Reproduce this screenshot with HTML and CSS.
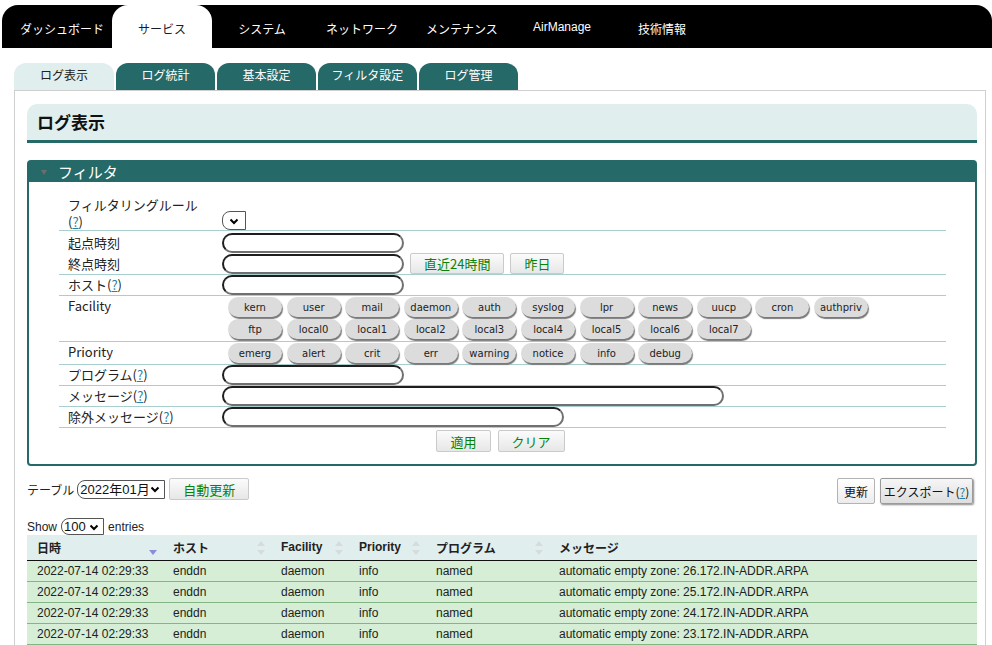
FILE: index.html
```html
<!DOCTYPE html>
<html lang="ja">
<head>
<meta charset="utf-8">
<title>ログ表示</title>
<link rel="stylesheet" href="styles.css">
</head>
<body>
<nav class="gnav">
  <a class="gnav-item">ダッシュボード</a>
  <a class="gnav-item is-active">サービス</a>
  <a class="gnav-item">システム</a>
  <a class="gnav-item">ネットワーク</a>
  <a class="gnav-item">メンテナンス</a>
  <a class="gnav-item gnav-latin">AirManage</a>
  <a class="gnav-item">技術情報</a>
</nav>
<div class="page">
  <ul class="subtabs">
    <li class="subtab is-active">ログ表示</li>
    <li class="subtab">ログ統計</li>
    <li class="subtab">基本設定</li>
    <li class="subtab">フィルタ設定</li>
    <li class="subtab">ログ管理</li>
  </ul>
  <div class="content">
    <h2 class="title">ログ表示</h2>
    <section class="panel">
      <div class="panel-head"><span class="tri"></span>フィルタ</div>
      <div class="panel-body">
        <table class="ftable">
          <tr class="r-rule">
            <th>フィルタリングルール<br>(<a class="help">?</a>)</th>
            <td class="cell-bottom">
              <span class="selbox sb-rule"><select class="sel"><option></option></select><svg class="chev" width="10" height="7" viewBox="0 0 10 7"><path d="M1.5 1.5l3.5 3.5 3.5-3.5" fill="none" stroke="#000" stroke-width="2"/></svg></span>
            </td>
          </tr>
          <tr class="r-time">
            <th>起点時刻<br>終点時刻</th>
            <td>
              <div class="line"><input class="txt w182" type="text"></div>
              <div class="line"><input class="txt w182" type="text"><button class="btn">直近24時間</button><button class="btn">昨日</button></div>
            </td>
          </tr>
          <tr>
            <th>ホスト(<a class="help">?</a>)</th>
            <td><input class="txt w182" type="text"></td>
          </tr>
          <tr>
            <th>Facility</th>
            <td>
              <div class="chips">
                <button class="chip">kern</button><button class="chip">user</button><button class="chip">mail</button><button class="chip">daemon</button><button class="chip">auth</button><button class="chip">syslog</button><button class="chip">lpr</button><button class="chip">news</button><button class="chip">uucp</button><button class="chip">cron</button><button class="chip">authpriv</button><button class="chip">ftp</button><button class="chip">local0</button><button class="chip">local1</button><button class="chip">local2</button><button class="chip">local3</button><button class="chip">local4</button><button class="chip">local5</button><button class="chip">local6</button><button class="chip">local7</button>
              </div>
            </td>
          </tr>
          <tr>
            <th>Priority</th>
            <td>
              <div class="chips chips-single">
                <button class="chip">emerg</button><button class="chip">alert</button><button class="chip">crit</button><button class="chip">err</button><button class="chip">warning</button><button class="chip">notice</button><button class="chip">info</button><button class="chip">debug</button>
              </div>
            </td>
          </tr>
          <tr>
            <th>プログラム(<a class="help">?</a>)</th>
            <td><input class="txt w182" type="text"></td>
          </tr>
          <tr>
            <th>メッセージ(<a class="help">?</a>)</th>
            <td><input class="txt w502" type="text"></td>
          </tr>
          <tr>
            <th>除外メッセージ(<a class="help">?</a>)</th>
            <td><input class="txt w342" type="text"></td>
          </tr>
        </table>
        <div class="actions">
          <button class="btn btn-act">適用</button><button class="btn btn-act">クリア</button>
        </div>
      </div>
    </section>

    <div class="toolbar">
      <div class="tb-left">
        <span class="tb-label">テーブル</span>
        <span class="selbox sb-table"><select class="sel"><option>2022年01月</option></select><svg class="chev" width="10" height="7" viewBox="0 0 10 7"><path d="M1.5 1.5l3.5 3.5 3.5-3.5" fill="none" stroke="#000" stroke-width="2"/></svg></span>
        <button class="btn btn-auto">自動更新</button>
      </div>
      <div class="tb-right">
        <button class="gbtn">更新</button>
        <button class="gbtn gbtn-export">エクスポート(<span class="help">?</span>)</button>
      </div>
    </div>

    <div class="show">Show <span class="selbox sb-len"><select class="sel"><option>100</option></select><svg class="chev" width="10" height="7" viewBox="0 0 10 7"><path d="M1.5 1.5l3.5 3.5 3.5-3.5" fill="none" stroke="#000" stroke-width="2"/></svg></span> entries</div>

    <table class="data">
      <colgroup>
        <col class="c1"><col class="c2"><col class="c3"><col class="c4"><col class="c5"><col>
      </colgroup>
      <thead>
        <tr>
          <th>日時<span class="sort"><svg width="8" height="14" viewBox="0 0 8 14"><path d="M0 9h8l-4 5z" fill="#8c8cdc"/></svg></span></th>
          <th>ホスト<span class="sort"><svg width="8" height="14" viewBox="0 0 8 14"><path d="M0 5h8L4 0z M0 9h8l-4 5z" fill="#d6dcdc"/></svg></span></th>
          <th>Facility<span class="sort"><svg width="8" height="14" viewBox="0 0 8 14"><path d="M0 5h8L4 0z M0 9h8l-4 5z" fill="#d6dcdc"/></svg></span></th>
          <th>Priority<span class="sort"><svg width="8" height="14" viewBox="0 0 8 14"><path d="M0 5h8L4 0z M0 9h8l-4 5z" fill="#d6dcdc"/></svg></span></th>
          <th>プログラム<span class="sort"><svg width="8" height="14" viewBox="0 0 8 14"><path d="M0 5h8L4 0z M0 9h8l-4 5z" fill="#d6dcdc"/></svg></span></th>
          <th>メッセージ</th>
        </tr>
      </thead>
      <tbody>
        <tr><td>2022-07-14 02:29:33</td><td>enddn</td><td>daemon</td><td>info</td><td>named</td><td>automatic empty zone: 26.172.IN-ADDR.ARPA</td></tr>
        <tr><td>2022-07-14 02:29:33</td><td>enddn</td><td>daemon</td><td>info</td><td>named</td><td>automatic empty zone: 25.172.IN-ADDR.ARPA</td></tr>
        <tr><td>2022-07-14 02:29:33</td><td>enddn</td><td>daemon</td><td>info</td><td>named</td><td>automatic empty zone: 24.172.IN-ADDR.ARPA</td></tr>
        <tr><td>2022-07-14 02:29:33</td><td>enddn</td><td>daemon</td><td>info</td><td>named</td><td>automatic empty zone: 23.172.IN-ADDR.ARPA</td></tr>
        <tr><td>2022-07-14 02:29:33</td><td>enddn</td><td>daemon</td><td>info</td><td>named</td><td>automatic empty zone: 22.172.IN-ADDR.ARPA</td></tr>
      </tbody>
    </table>
  </div>
</div>
</body>
</html>
```

FILE: styles.css
```css
* { box-sizing: border-box; }
html { overflow: hidden; }
body {
  margin: 0;
  padding-top: 5px;
  background: #fff;
  color: #222;
  font-family: "Noto Sans CJK JP", "Liberation Sans", sans-serif;
  font-size: 13px;
}
a { color: inherit; text-decoration: none; }
button { cursor: pointer; }

/* global nav */
.gnav {
  display: flex;
  height: 43px;
  margin-left: 2px;
  padding-left: 10px;
  background: #000;
  border-radius: 16px 16px 0 0;
}
.gnav-item {
  width: 100px;
  padding-top: 15px;
  text-align: center;
  font-size: 12px;
  line-height: 18px;
  color: #fff;
}
.gnav-item.is-active {
  background: #fff;
  color: #1a1a2a;
  border-radius: 16px 16px 0 0;
}
.gnav-latin {
  font-family: "Liberation Sans", sans-serif;
  padding-top: 13px;
}

/* sub tabs */
.page { padding-left: 14px; }
.subtabs {
  display: flex;
  list-style: none;
  margin: 15px 0 0;
  padding: 0;
  height: 27px;
}
.subtab {
  width: 99px;
  margin-right: 2px;
  padding-top: 4px;
  border-radius: 12px 12px 0 0;
  background: #266969;
  color: #fff;
  text-align: center;
  font-size: 12px;
  line-height: 16px;
}
.subtab.is-active {
  width: 100px;
  background: #e0eeee;
  color: #222;
}

/* content box */
.content {
  width: 972px;
  height: 600px;
  border: 1px solid #cfcfcf;
  border-bottom: 0;
  padding: 13px 8px 0 12px;
}
.title {
  margin: 0;
  height: 39px;
  padding-left: 10px;
  background: #e0eeee;
  border-bottom: 3px solid #266969;
  border-radius: 10px 10px 0 0;
  font-size: 17px;
  line-height: 36px;
  font-weight: bold;
  color: #111;
}

/* filter panel */
.panel {
  margin-top: 17px;
  border: 2px solid #266969;
  border-radius: 4px;
}
.panel-head {
  display: flex;
  align-items: center;
  height: 20px;
  padding-left: 12px;
  background: #266969;
  color: #fff;
  font-size: 15px;
  line-height: 20px;
}
.tri {
  width: 0;
  height: 0;
  border-left: 3.5px solid transparent;
  border-right: 3.5px solid transparent;
  border-top: 5px solid #6d6d6d;
  margin-right: 11px;
}
.panel-body { padding: 14px 29px 12px 30px; }

.ftable { width: 100%; border-collapse: collapse; }
.ftable tr { border-bottom: 1px solid #a8cfcf; }
.ftable th {
  width: 163px;
  padding: 0 0 0 9px;
  text-align: left;
  font-weight: normal;
  vertical-align: top;
  font-size: 13px;
  line-height: 20px;
  color: #222;
}
.ftable td { padding: 0; vertical-align: top; }
.ftable .r-rule th { line-height: 17px; }
.ftable .cell-bottom { vertical-align: bottom; }
.ftable .r-time th { line-height: 21px; padding-top: 1px; }
.line {
  display: flex;
  align-items: center;
  height: 21px;
}
.r-time td { padding-top: 1px; }

.help {
  color: #2b7fa3;
  text-decoration: underline;
}

.txt {
  display: block;
  height: 20px;
  padding: 0 8px;
  border: 2px solid;
  border-color: #1e1e1e #707070 #707070 #1e1e1e;
  border-radius: 10px;
  background: #fff;
  font: 13px "Liberation Sans", sans-serif;
}
.w182 { width: 182px; }
.w502 { width: 502px; }
.w342 { width: 342px; }

.btn {
  height: 21px;
  margin-left: 6px;
  padding: 0 13px;
  border: 1px solid #cacaca;
  border-radius: 2px;
  background: linear-gradient(#fbfbfb, #e7e7e7);
  color: #078307;
  font: 13px/19px "Noto Sans CJK JP", sans-serif;
}

.chips {
  display: flex;
  flex-wrap: wrap;
  width: 656px;
  gap: 2px 4.6px;
  padding: 1px 0 2px 6px;
}
.chips-single { padding-bottom: 1px; }
.chip {
  width: 54px;
  height: 20px;
  padding: 0;
  border: 0;
  border-radius: 10px;
  background: #dcdcdc;
  box-shadow: 1px 2px 1px #7a7a7a;
  color: #222;
  text-align: center;
  font: 10px/21px "DejaVu Sans", sans-serif;
}

.actions {
  display: flex;
  justify-content: center;
  gap: 7px;
  padding: 2px 4px 0 0;
}
.btn-act {
  height: 22px;
  margin: 0;
  padding: 0 13px;
}

/* selects */
.selbox {
  position: relative;
  display: inline-block;
  vertical-align: middle;
}
.sel {
  display: block;
  width: 100%;
  height: 100%;
  margin: 0;
  padding: 0 0 0 2px;
  border: 1px solid #555;
  border-radius: 8px 0 0 8px;
  background: #fff;
  color: #111;
  font: 13px "Liberation Sans", "Noto Sans CJK JP", sans-serif;
  appearance: none;
  -webkit-appearance: none;
}
.chev {
  position: absolute;
  right: 5px;
  top: 50%;
  margin-top: -3px;
  pointer-events: none;
}
.sb-rule { display: block; width: 24px; height: 19px; }
.sb-rule .chev { right: 7px; }
.sb-table { width: 88px; height: 19px; }
.sb-len { width: 43px; height: 17px; }

/* toolbar */
.toolbar {
  display: flex;
  justify-content: space-between;
  align-items: flex-start;
  margin-top: 12px;
  padding-right: 4px;
}
.tb-left {
  display: flex;
  align-items: center;
  height: 22px;
}
.tb-label { font-size: 12px; margin-right: 3px; }
.btn-auto { height: 22px; margin-left: 4px; padding: 0 13px; }
.tb-right { display: flex; gap: 5px; }
.gbtn {
  height: 26px;
  padding: 0 6px;
  border: 1px solid #b3b3b3;
  border-radius: 2px;
  background: linear-gradient(#ffffff, #ececec);
  color: #111;
  font: 12px "Noto Sans CJK JP", sans-serif;
}
.gbtn-export {
  width: 93px;
  padding: 0;
  border-color: #9a9a9a;
  background: linear-gradient(#f6f6f6, #dedede);
  box-shadow: 1px 1px 2px #8a8a8a;
}

.show {
  display: flex;
  align-items: center;
  gap: 4px;
  height: 17px;
  margin-top: 14px;
  font: 12px "Liberation Sans", sans-serif;
}

/* data table */
.data {
  width: 950px;
  border-collapse: collapse;
  table-layout: fixed;
  font: 12px "Liberation Sans", "Noto Sans CJK JP", sans-serif;
  color: #222;
}
.c1 { width: 136px; }
.c2 { width: 108px; }
.c3 { width: 78px; }
.c4 { width: 77px; }
.c5 { width: 123px; }
.data th {
  position: relative;
  height: 25px;
  padding: 0 10px;
  background: #e0eeee;
  border-bottom: 1px solid #111;
  text-align: left;
  font-weight: bold;
  white-space: nowrap;
}
.sort {
  position: absolute;
  right: 6px;
  top: 6px;
  line-height: 0;
}
.data td {
  height: 21px;
  padding: 0 10px;
  background: #d5eed5;
  border-bottom: 1px solid #84b584;
  white-space: nowrap;
}
```
